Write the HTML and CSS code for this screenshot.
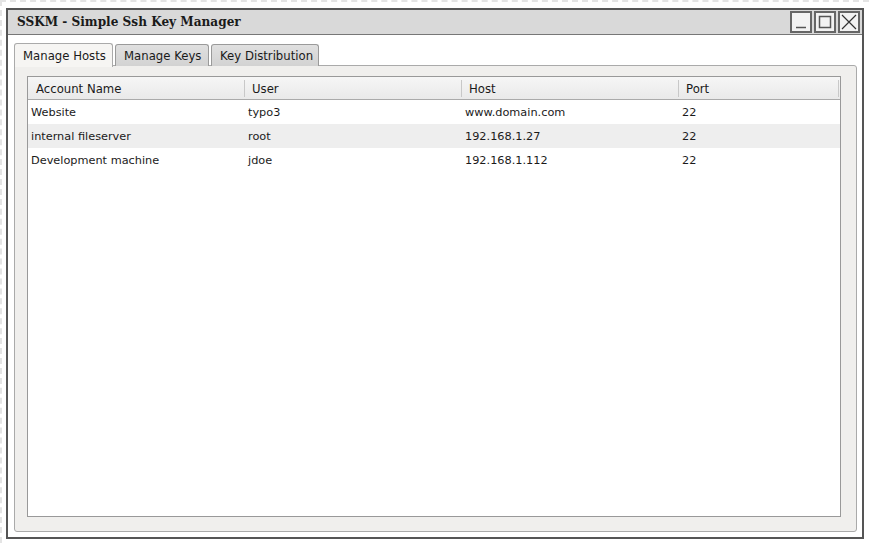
FILE: index.html
```html
<!DOCTYPE html>
<html>
<head>
<meta charset="utf-8">
<link rel="stylesheet" href="styles.css">
</head>
<body>
<div class="canvas">
  <div class="window">
    <div class="titlebar">
      <span class="title">SSKM - Simple Ssh Key Manager</span>
      <div class="controls">
        <span class="ctl"><svg width="18" height="18" viewBox="0 0 18 18"><line x1="4" y1="14.5" x2="14" y2="14.5" stroke="#555" stroke-width="1.5"/></svg></span>
        <span class="ctl"><svg width="18" height="18" viewBox="0 0 18 18"><rect x="3.5" y="3.5" width="11" height="11" fill="none" stroke="#555" stroke-width="1.5"/></svg></span>
        <span class="ctl"><svg width="18" height="18" viewBox="0 0 18 18"><path d="M2 2 L16 16 M16 2 L2 16" stroke="#333" stroke-width="1.2"/></svg></span>
      </div>
    </div>
    <div class="content">
      <div class="tabs">
        <div class="tab active hosts">Manage Hosts</div>
        <div class="tab keys">Manage Keys</div>
        <div class="tab dist">Key Distribution</div>
      </div>
      <div class="panel">
        <div class="table">
          <div class="thead">
            <div class="th">Account Name</div>
            <div class="th sep">User</div>
            <div class="th sep">Host</div>
            <div class="th sep last">Port</div>
          </div>
          <div class="row">
            <div class="td">Website</div><div class="td">typo3</div><div class="td">www.domain.com</div><div class="td">22</div>
          </div>
          <div class="row alt">
            <div class="td">internal fileserver</div><div class="td">root</div><div class="td">192.168.1.27</div><div class="td">22</div>
          </div>
          <div class="row">
            <div class="td">Development machine</div><div class="td">jdoe</div><div class="td">192.168.1.112</div><div class="td">22</div>
          </div>
        </div>
      </div>
    </div>
  </div>
</div>
</body>
</html>
```
FILE: styles.css
```css
html, body {
  margin: 0;
  padding: 0;
  background: #fff;
  overflow: hidden;
}
.canvas {
  width: 869px;
  height: 543px;
  box-sizing: border-box;
  border-top: 2px dashed #e4e4e4;
  border-left: 2px dashed #e4e4e4;
  padding: 6px 0 0 4px;
  font-family: "DejaVu Sans", sans-serif;
  color: #1a1a1a;
}
.window {
  width: 858px;
  height: 531px;
  box-sizing: border-box;
  border: 2px solid #555;
  display: flex;
  flex-direction: column;
  background: #fff;
}
.titlebar {
  height: 25px;
  flex: none;
  box-sizing: border-box;
  background: #d9d9d9;
  border-bottom: 1px solid #777;
  display: flex;
  align-items: center;
  padding-left: 9px;
  padding-right: 2px;
}
.title {
  font-family: "DejaVu Serif", serif;
  font-weight: bold;
  font-size: 12.1px;
  flex: 1;
}
.controls {
  display: flex;
  gap: 2px;
  align-items: center;
}
.ctl {
  width: 22px;
  height: 22px;
  box-sizing: border-box;
  border: 2px solid #666;
  background: #f2f2f2;
  display: flex;
  align-items: center;
  justify-content: center;
}
.content {
  flex: 1;
  display: flex;
  flex-direction: column;
  padding: 8px 5px 5px 6px;
}
.tabs {
  display: flex;
  gap: 2px;
  height: 23px;
  flex: none;
  position: relative;
  z-index: 1;
}
.tab {
  box-sizing: border-box;
  height: 22px;
  margin-top: 1px;
  padding: 1px 0 0 8px;
  font-size: 11.7px;
  line-height: 20px;
  border: 1px solid #9a9a9a;
  border-bottom: none;
  border-radius: 3px 3px 0 0;
  background: linear-gradient(#e0e0e0, #d2d2d2);
  white-space: nowrap;
  overflow: hidden;
}
.tab.hosts { width: 99px; }
.tab.keys { width: 94px; }
.tab.dist { width: 108px; }
.tab.active {
  height: 24px;
  margin-top: 0;
  background: #f6f5f3;
  border-color: #aaa;
  padding-top: 2px;
}
.panel {
  flex: 1;
  margin-top: -1px;
  box-sizing: border-box;
  border: 1px solid #aaa;
  border-radius: 0 3px 3px 3px;
  background: #f0efed;
  padding: 10px 15px 14px 12px;
  display: flex;
}
.table {
  flex: 1;
  border: 1px solid #999;
  background: #fff;
}
.thead, .row {
  display: grid;
  grid-template-columns: 216px 217px 217px 1fr;
}
.thead {
  height: 22px;
  border-bottom: 1px solid #aaa;
  background: linear-gradient(#f6f6f6, #e9e9e9);
}
.th {
  position: relative;
  font-size: 11.7px;
  line-height: 22px;
  padding: 1px 0 0 8px;
}
.th.sep::before {
  content: "";
  position: absolute;
  left: 0;
  top: 3px;
  bottom: 3px;
  width: 1px;
  background: #c8c8c8;
}
.th.last::after {
  content: "";
  position: absolute;
  right: 1px;
  top: 3px;
  bottom: 3px;
  width: 1px;
  background: #c8c8c8;
}
.row {
  height: 24px;
}
.row.alt {
  background: #eeeeee;
}
.td {
  font-size: 11.3px;
  line-height: 24px;
  padding: 1px 0 0 3px;
  white-space: nowrap;
}
.td + .td {
  padding-left: 4px;
}
```
